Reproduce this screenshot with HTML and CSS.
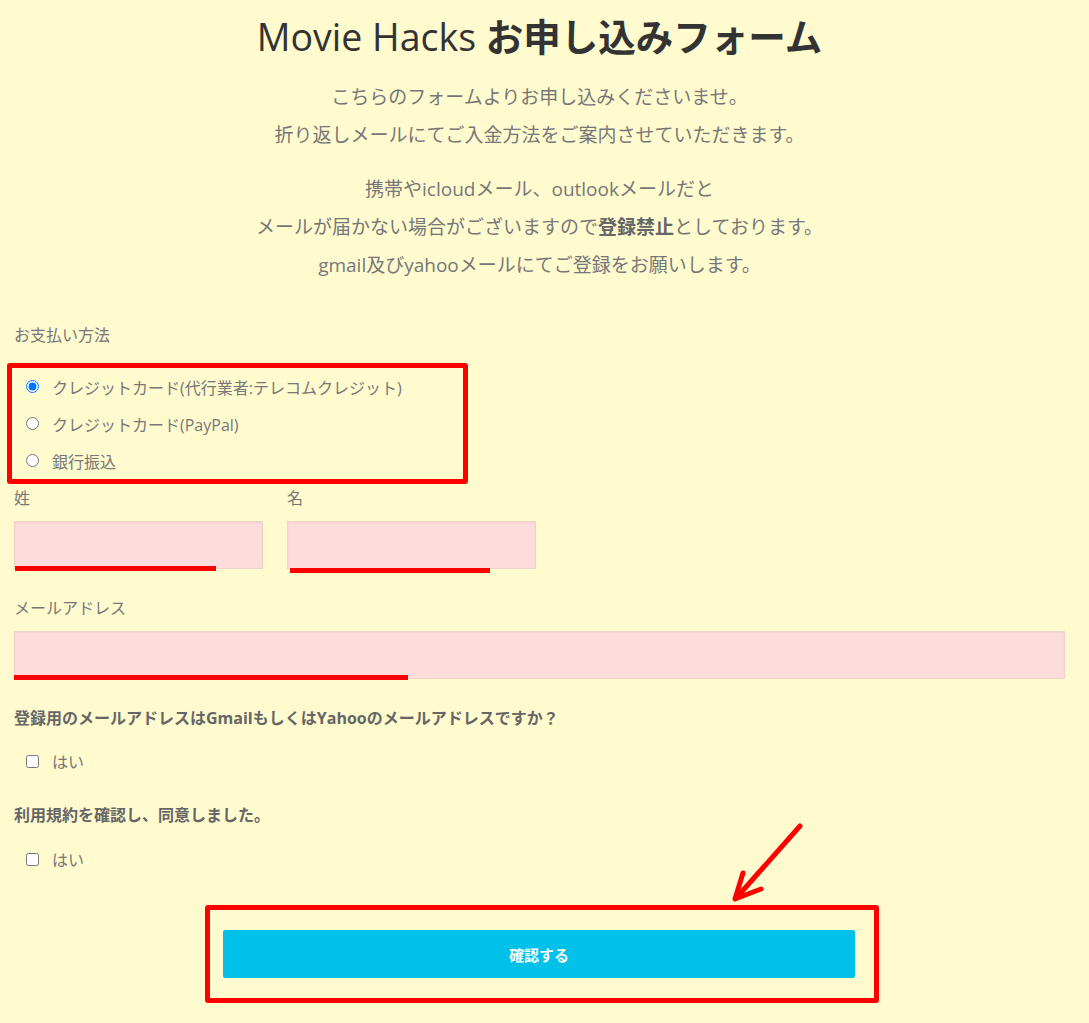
FILE: index.html
```html
<!DOCTYPE html>
<html lang="ja">
<head>
  <meta charset="UTF-8" />
  <title>Movie Hacks お申し込みフォーム</title>
  <meta name="viewport" content="width=device-width, initial-scale=1.0" />
  <link rel="stylesheet" href="styles.css">
</head>
<body>

<div class="page">
  <h1 class="title">Movie Hacks <span class="title-jp">お申し込みフォーム</span></h1>

  <p class="lead lead-first">こちらのフォームよりお申し込みくださいませ。<br>折り返しメールにてご入金方法をご案内させていただきます。</p>
  <p class="lead">携帯やicloudメール、outlookメールだと<br>メールが届かない場合がございますので<strong>登録禁止</strong>としております。<br>gmail及びyahooメールにてご登録をお願いします。</p>

  <form class="form" onsubmit="return false;">
    <div class="field-label pay-label">お支払い方法</div>
    <div class="radio-group mark-box">
      <label class="choice"><input type="radio" name="pay" checked> クレジットカード(代行業者:テレコムクレジット)</label>
      <label class="choice"><input type="radio" name="pay"> クレジットカード(PayPal)</label>
      <label class="choice"><input type="radio" name="pay"> 銀行振込</label>
    </div>

    <div class="name-row">
      <div class="name-field">
        <label class="field-label">姓</label>
        <div class="input-wrap">
          <input class="text-input" type="text">
          <span class="mark-line line-sei"></span>
        </div>
      </div>
      <div class="name-field">
        <label class="field-label">名</label>
        <div class="input-wrap">
          <input class="text-input" type="text">
          <span class="mark-line line-mei"></span>
        </div>
      </div>
    </div>

    <label class="field-label mail-label">メールアドレス</label>
    <div class="input-wrap">
      <input class="text-input" type="email">
      <span class="mark-line line-mail"></span>
    </div>

    <div class="question q-mail">登録用のメールアドレスはGmailもしくはYahooのメールアドレスですか？</div>
    <label class="check-row"><input type="checkbox"> はい</label>

    <div class="question q-terms">利用規約を確認し、同意しました。</div>
    <label class="check-row check-last"><input type="checkbox"> はい</label>

    <div class="submit-box mark-box">
      <button class="submit-btn" type="submit">確認する</button>
    </div>
  </form>

  <svg class="arrow" width="90" height="95" viewBox="0 0 90 95">
    <path d="M75 11 L13 81" stroke="#ff0000" stroke-width="5" stroke-linecap="round" fill="none"/>
    <path d="M18 58 L10 84 L36 74" stroke="#ff0000" stroke-width="5" stroke-linecap="round" stroke-linejoin="round" fill="none"/>
  </svg>
</div>

</body>
</html>
```

FILE: styles.css
```css
body {
  margin: 0;
  background: #fffbcf;
  font-family: "Open Sans", "Noto Sans CJK JP", sans-serif;
  color: #777;
}
.page {
  position: relative;
  padding: 14px 24px 20px 14px;
}
.title {
  margin: 0;
  font-size: 37.5px;
  line-height: 41px;
  font-weight: 400;
  color: #333;
  text-align: center;
}
.title-jp {
  font-family: "Noto Sans CJK JP", sans-serif;
  font-weight: 700;
}
.lead {
  margin: 16px 0 0;
  font-size: 19px;
  line-height: 38px;
  text-align: center;
  color: #777;
}
.lead-first { margin-top: 21px; }
.lead strong { color: #666; }

.form { margin: 0; }
.field-label {
  display: block;
  font-size: 16px;
  line-height: 20px;
  color: #777;
}
.pay-label { margin-top: 41px; }
.mark-box {
  border: 5px solid #ff0000;
  border-radius: 3px;
  box-sizing: border-box;
}
.radio-group {
  margin: 18px 0 0 -7px;
  width: 461px;
  padding-left: 14px;
}
.choice {
  display: flex;
  align-items: center;
  gap: 13px;
  height: 37px;
  font-size: 16px;
  color: #777;
}
.choice input,
.check-row input {
  margin: 0;
  width: 13px;
  height: 13px;
}

.name-row {
  display: flex;
  gap: 24px;
  margin-top: 4px;
}
.name-field { width: 249px; }
.input-wrap {
  position: relative;
  margin-top: 13px;
}
.text-input {
  display: block;
  width: 100%;
  height: 48px;
  box-sizing: border-box;
  background: #ffdcdc;
  border: 1px solid #ecd4c8;
  box-shadow: inset 0 1px 2px rgba(0,0,0,0.05);
  padding: 6px 10px;
}
.mark-line {
  position: absolute;
  height: 5px;
  background: #ff0000;
}
.line-sei { left: 1px; top: 45px; width: 201px; }
.line-mei { left: 3px; top: 47px; width: 200px; }
.line-mail { left: 0; top: 44px; width: 394px; }
.mail-label { margin-top: 29px; }

.question {
  margin-top: 29px;
  font-size: 16px;
  line-height: 20px;
  font-weight: 700;
  color: #666;
}
.q-terms { margin-top: 25px; }
.check-row {
  display: flex;
  align-items: center;
  gap: 13px;
  height: 38px;
  margin-top: 14px;
  padding-left: 12px;
  font-size: 16px;
  color: #777;
}
.check-last { margin-top: 15px; }

.submit-box {
  width: 674px;
  margin: 27px 0 0 191px;
  padding: 20px 19px 20px 13px;
}
.submit-btn {
  display: block;
  width: 100%;
  height: 48px;
  border: none;
  border-radius: 2px;
  background: #02c1e8;
  color: #fff;
  font-family: "Noto Sans CJK JP", sans-serif;
  font-size: 15px;
  font-weight: 700;
  cursor: pointer;
}
.arrow {
  position: absolute;
  left: 725px;
  top: 815px;
}
```
